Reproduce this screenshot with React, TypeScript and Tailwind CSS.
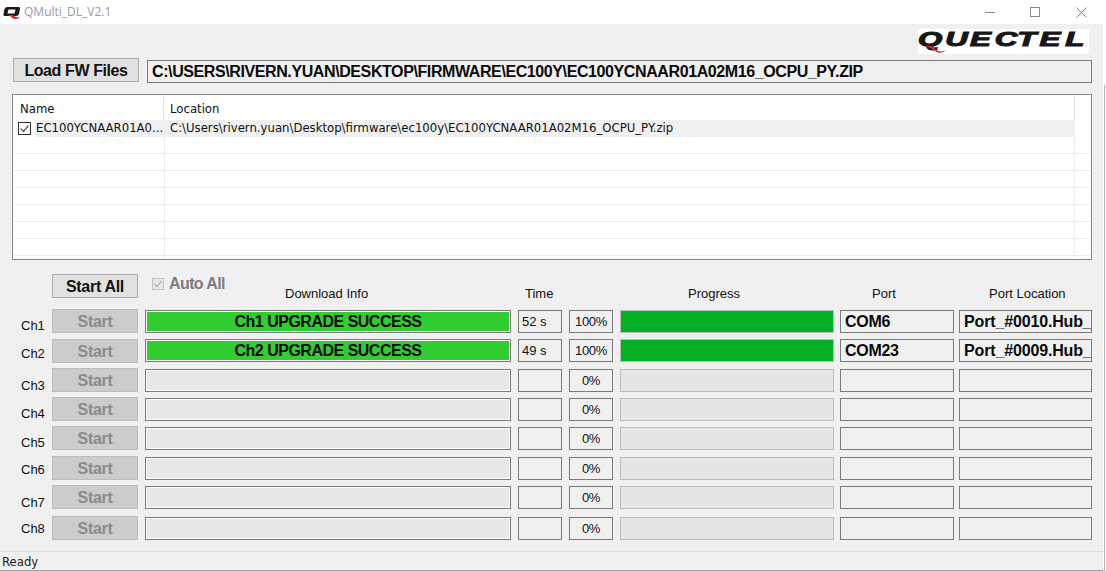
const UI_FONT = "font-['Liberation_Sans',Arial,sans-serif]";
const LIST_FONT = "font-['DejaVu_Sans',Verdana,sans-serif]";

type Row = {
  id: string;
  height: string;
  labelPad: string;
  boxTop: string;
  status?: string;
  time?: string;
  pct: string;
  done?: boolean;
  port?: string;
  location?: string;
};

const rows: Row[] = [
  { id: "Ch1", height: "h-[30px]", labelPad: "pt-[9px]", boxTop: "mt-px", status: "Ch1 UPGRADE SUCCESS", time: "52 s", pct: "100%", done: true, port: "COM6", location: "Port_#0010.Hub_" },
  { id: "Ch2", height: "h-[29px]", labelPad: "pt-[7px]", boxTop: "mt-0", status: "Ch2 UPGRADE SUCCESS", time: "49 s", pct: "100%", done: true, port: "COM23", location: "Port_#0009.Hub_" },
  { id: "Ch3", height: "h-[29px]", labelPad: "pt-[10px]", boxTop: "mt-px", pct: "0%" },
  { id: "Ch4", height: "h-[29px]", labelPad: "pt-[9px]", boxTop: "mt-px", pct: "0%" },
  { id: "Ch5", height: "h-[30px]", labelPad: "pt-[9px]", boxTop: "mt-px", pct: "0%" },
  { id: "Ch6", height: "h-[29px]", labelPad: "pt-[6px]", boxTop: "mt-px", pct: "0%" },
  { id: "Ch7", height: "h-[31px]", labelPad: "pt-[10px]", boxTop: "mt-px", pct: "0%" },
  { id: "Ch8", height: "h-[24px]", labelPad: "pt-[5px]", boxTop: "mt-px", pct: "0%" },
];

function QuectelLogo() {
  return (
    <svg width="171" height="25" viewBox="0 0 171 25" className="bg-white" aria-label="Quectel logo">
      <g transform="scale(1.6 1)">
        <text x="0 17 32.500 48 62 76 92" y="16.500" fontFamily="Liberation Sans" fontWeight="700" fontStyle="italic" fontSize="19.500" fill="#17171a" stroke="#17171a" strokeWidth="1.100">
          QUECTEL
        </text>
      </g>
      <path d="M6 17c6-1 9 1 12 3.500s7 3 11-.5c-3 4-8 5-12 2s-6-4-11-5z" fill="#e8262c" />
    </svg>
  );
}

function AppIcon() {
  return (
    <svg width="18" height="18" viewBox="0 0 18 18" aria-hidden>
      <path d="M5.500 4h11q2 0 1.500 2l-1 5q-.5 2-3 2H3q-2 0-1.500-2l1-5q.5-2 3-2zM6.500 6.500l-1 4h7l1-4z" fill="#1b1b1d" fillRule="evenodd" />
      <path d="M6 12.500c3 0 4 3.500 7 3.500 2 0 4-.5 5-2-2 .5-3.500.5-5-.5s-3-2-7-1z" fill="#e3242b" />
    </svg>
  );
}

function TitleBar() {
  return (
    <div className="flex h-[24px] shrink-0 items-center bg-white">
      <div className="ml-[2px] flex w-[22px]">
        <AppIcon />
      </div>
      <span className="font-['Open_Sans',sans-serif] text-[12px] text-[#9a9a9a]">QMulti_DL_V2.1</span>
      <div className="ml-auto flex items-center">
        <div className="h-px w-[10px] bg-[#8a8a8a]" />
        <div className="ml-[35px] h-[10px] w-[10px] border border-[#8a8a8a]" />
        <svg width="11" height="11" viewBox="0 0 11 11" className="mr-[16px] ml-[36px]" aria-hidden>
          <path d="M.5.500l10 10M10.500.500l-10 10" stroke="#8a8a8a" strokeWidth="1" fill="none" />
        </svg>
      </div>
    </div>
  );
}

function FileList() {
  const blanks = [1, 2, 3, 4, 5, 6, 7];
  return (
    <div className={`ml-[12px] flex h-[166px] w-[1080px] flex-col border border-[#82878f] bg-white px-px ${LIST_FONT} text-[11.7px] text-[#111]`}>
      <div className="flex h-[25px] shrink-0 items-center">
        <div className="h-[24px] w-[150px] border-r border-[#e5e5e5] pt-[5px] pl-[6px]">Name</div>
        <div className="h-[24px] w-[911px] border-r border-[#e5e5e5] pt-[5px] pl-[6px]">Location</div>
      </div>
      <div className="flex h-[17px] shrink-0 items-center">
        <div className="flex w-[21px] justify-center">
          <svg width="13" height="13" viewBox="0 0 13 13" aria-hidden>
            <rect x=".5" y=".5" width="12" height="12" fill="#fff" stroke="#333" />
            <path d="M2.500 6.500l3 3 5-6" fill="none" stroke="#555" strokeWidth="1.200" />
          </svg>
        </div>
        <div className="flex h-full w-[1040px] items-center bg-[#f0f0f0] pt-px">
          <span className="w-[130px] pl-px whitespace-nowrap">EC100YCNAAR01A0...</span>
          <span className="pl-[5px] whitespace-nowrap">C:\Users\rivern.yuan\Desktop\firmware\ec100y\EC100YCNAAR01A02M16_OCPU_PY.zip</span>
        </div>
      </div>
      {blanks.map((n) => (
        <div key={n} className="flex h-[17px] shrink-0 border-b border-[#ededed]">
          <div className="w-[151px] border-r border-[#ededed]" />
          <div className="w-[910px] border-r border-[#ededed]" />
        </div>
      ))}
      <div className="flex h-[2px] shrink-0">
        <div className="w-[151px] border-r border-[#ededed]" />
        <div className="w-[910px] border-r border-[#ededed]" />
      </div>
    </div>
  );
}

function HeaderRow() {
  return (
    <div className={`flex h-[35px] items-start ${UI_FONT} text-[13px] text-[#111]`}>
      <button className="ml-[52px] h-[24px] w-[86px] border border-[#adadad] bg-[#e1e1e1] text-[16px] font-bold tracking-[-0.3px]">Start All</button>
      <div className="ml-[14px] flex h-[24px] w-[93px] items-center">
        <svg width="12" height="12" viewBox="0 0 12 12" className="mb-[4px]" aria-hidden>
          <rect x=".5" y=".5" width="11" height="11" fill="#e8e8e8" stroke="#c4c4c4" />
          <path d="M2.500 6l2.500 2.500 4.500-5.500" fill="none" stroke="#b5b5b5" strokeWidth="1.300" />
        </svg>
        <span className="mb-[4px] ml-[5px] text-[16px] font-bold tracking-[-0.6px] text-[#7d7d7d]">Auto All</span>
      </div>
      <div className="w-[280px] pt-[10px] pl-[40px] whitespace-nowrap">Download Info</div>
      <div className="w-[163px] pt-[10px]">Time</div>
      <div className="w-[184px] pt-[10px]">Progress</div>
      <div className="w-[117px] pt-[10px]">Port</div>
      <div className="pt-[10px] whitespace-nowrap">Port Location</div>
    </div>
  );
}

function ChannelRow({ row }: { row: Row }) {
  return (
    <div className={`flex items-start ${row.height} ${UI_FONT}`}>
      <div className={`w-[52px] pl-[21px] text-[13px] leading-[16px] text-[#111] ${row.labelPad}`}>{row.id}</div>
      <button className="h-[24px] w-[86px] border border-[#bdbdbd] bg-[#cccccc] text-[16px] font-bold tracking-[-0.3px] text-[#8a8a8a]">Start</button>
      <div className={`ml-[7px] h-[23px] w-[366px] border border-[#7a7a7a] bg-white p-px ${row.boxTop}`}>
        <div className={`flex h-full items-center justify-center text-[16px] font-bold tracking-[-0.5px] text-[#0a0a0a] ${row.done ? "bg-[#32cd32]" : "bg-[#e8e8e8]"}`}>
          {row.status}
        </div>
      </div>
      <div className={`ml-[7px] flex h-[23px] w-[44px] items-center border border-[#7a7a7a] bg-[#f0f0f0] pl-[3px] text-[13px] text-[#111] ${row.boxTop}`}>{row.time}</div>
      <div className={`ml-[7px] flex h-[23px] w-[44px] items-center justify-center border border-[#7a7a7a] bg-[#f0f0f0] text-[13px] tracking-[-0.3px] text-[#111] ${row.boxTop}`}>{row.pct}</div>
      <div className={`ml-[7px] h-[23px] w-[214px] border border-[#bcbcbc] ${row.done ? "bg-[#06b025]" : "bg-[#e6e6e6]"} ${row.boxTop}`} />
      <div className={`ml-[6px] flex h-[23px] w-[114px] items-center border border-[#7a7a7a] bg-[#f0f0f0] pl-[4px] text-[16px] font-bold tracking-[-0.3px] text-[#0a0a0a] ${row.boxTop}`}>{row.port}</div>
      <div className={`ml-[5px] flex h-[23px] w-[133px] items-center overflow-hidden border border-[#7a7a7a] bg-[#f0f0f0] pl-[4px] text-[16px] font-bold tracking-[-0.15px] whitespace-nowrap text-[#0a0a0a] ${row.boxTop}`}>{row.location}</div>
    </div>
  );
}

export default function App() {
  return (
    <div className="flex h-[571px] w-[1106px] overflow-hidden bg-white">
      <div className="flex w-[1103px] flex-col">
        <TitleBar />
        <div className="flex flex-1 flex-col bg-[#f0f0f0]">
          <div className="flex h-[34px] shrink-0 justify-end pt-[5px] pr-[14px]">
            <QuectelLogo />
          </div>
          {/* Firmware path */}
          <div className={`flex h-[36px] shrink-0 items-start ${UI_FONT}`}>
            <button className="ml-[13px] h-[24px] w-[126px] border border-[#adadad] bg-[#e1e1e1] text-[16px] font-bold tracking-[-0.4px] text-[#111]">Load FW Files</button>
            <div className="mt-[2px] ml-[8px] flex h-[23px] w-[945px] items-center border border-[#7a7a7a] pl-[4px] text-[16px] font-bold tracking-[-0.4px] text-[#0a0a0a]">
              C:\USERS\RIVERN.YUAN\DESKTOP\FIRMWARE\EC100Y\EC100YCNAAR01A02M16_OCPU_PY.ZIP
            </div>
          </div>
          <FileList />
          <div className="mt-[14px]">
            <HeaderRow />
            {rows.map((row) => (
              <ChannelRow key={row.id} row={row} />
            ))}
          </div>
          {/* Status bar */}
          <div className={`mt-auto flex h-[20px] items-center border-t border-b border-t-[#dcdcdc] border-b-[#a0a0a0] pt-[3px] pl-[2px] ${LIST_FONT} text-[11.7px] text-[#222]`}>Ready</div>
        </div>
      </div>
      <div className="mt-[85px] ml-px h-[486px] w-px bg-[#b4b4b4]" />
    </div>
  );
}
